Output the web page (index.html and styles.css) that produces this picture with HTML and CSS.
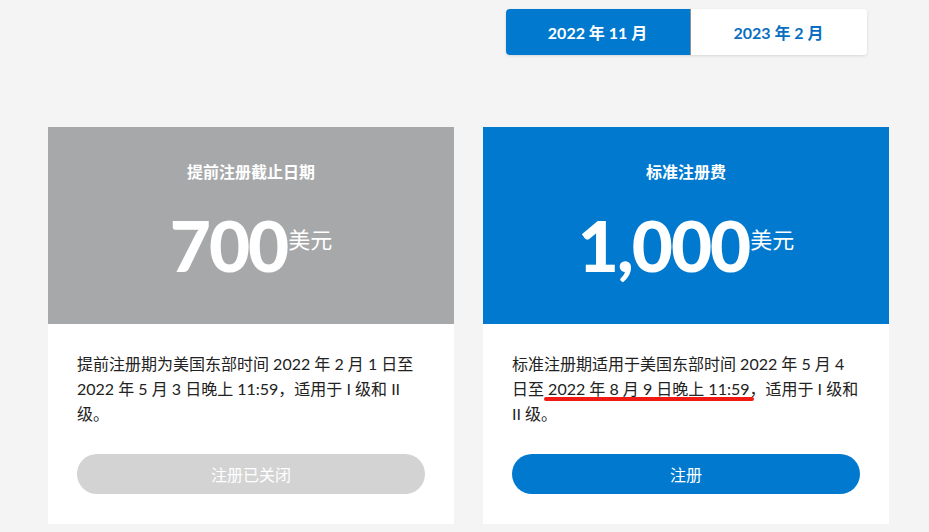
FILE: index.html
```html
<!DOCTYPE html>
<html lang="zh-CN">
<head>
    <meta charset="UTF-8">
    <meta name="viewport" content="width=device-width, initial-scale=1.0">
    <title>注册费</title>
    <link rel="stylesheet" href="styles.css">
</head>
<body>
    <div class="page">
        <div class="tabs-row">
            <div class="tabs">
                <button class="tab active">2022 年 11 月</button>
                <button class="tab">2023 年 2 月</button>
            </div>
        </div>

        <div class="cards">
            <div class="card">
                <div class="card-head grey">
                    <h2 class="card-title">提前注册截止日期</h2>
                    <div class="price">
                        <span class="amount">700</span><span class="unit">美元</span>
                    </div>
                </div>
                <div class="card-body">
                    <p class="desc">提前注册期为美国东部时间 2022 年 2 月 1 日至 2022 年 5 月 3 日晚上 11:59，适用于 I 级和 II 级。</p>
                    <button class="btn disabled">注册已关闭</button>
                </div>
            </div>

            <div class="card">
                <div class="card-head blue">
                    <h2 class="card-title">标准注册费</h2>
                    <div class="price">
                        <span class="amount">1,000</span><span class="unit">美元</span>
                    </div>
                </div>
                <div class="card-body">
                    <p class="desc">标准注册期适用于美国东部时间 2022 年 5 月 4 日至<span class="mark"> 2022 年 8 月 9 日晚上 11:59</span>，适用于 I 级和 II 级。</p>
                    <button class="btn">注册</button>
                </div>
            </div>
        </div>
    </div>
</body>
</html>
```

FILE: styles.css
```css
body {
    margin: 0;
    background-color: #f4f4f4;
    font-family: Lato, "Noto Sans CJK SC", sans-serif;
    color: #222;
}

.page {
    width: 841px;
    margin-left: 48px;
}

/* 月份切换 */
.tabs-row {
    display: grid;
    grid-template-columns: 406px 406px;
    column-gap: 29px;
    padding-top: 9px;
}

.tabs {
    grid-column: 2;
    justify-self: center;
    display: flex;
    width: 361px;
    height: 46px;
    border-radius: 4px;
    background-color: #fff;
    box-shadow: 0 1px 3px rgba(0, 0, 0, 0.12);
    overflow: hidden;
}

.tab {
    flex: 1;
    border: none;
    background: #fff;
    color: #0a6fc2;
    font-family: Lato, "Noto Sans CJK SC", sans-serif;
    font-size: 16px;
    font-weight: 700;
    cursor: pointer;
}

.tab.active {
    flex: 0 0 185px;
    background-color: #0079cf;
    color: #fff;
    border-right: 1px solid #8a8f96;
}

/* 价格卡片 */
.cards {
    display: grid;
    grid-template-columns: 406px 406px;
    column-gap: 29px;
    margin-top: 72px;
}

.card {
    background-color: #fff;
}

.card-head {
    height: 197px;
    display: flex;
    flex-direction: column;
    align-items: center;
    color: #fff;
}

.card-head.grey {
    background-color: #a7a8aa;
}

.card-head.blue {
    background-color: #0079cf;
}

.card-title {
    margin: 33px 0 0;
    font-size: 16px;
    font-weight: 700;
    line-height: 24px;
}

.price {
    display: flex;
    align-items: flex-start;
    margin-top: 19px;
}

.amount {
    font-size: 71px;
    font-weight: 900;
    line-height: 84px;
    letter-spacing: -2px;
}

.unit {
    font-size: 22px;
    line-height: 22px;
    margin-top: 26px;
    margin-left: 1px;
}

.card-body {
    padding: 27px 29px 30px;
}

.desc {
    margin: 0 0 28px;
    font-size: 16px;
    line-height: 25px;
    min-height: 75px;
}

/* 红色标注线 */
.mark {
    position: relative;
}

.mark::after {
    content: "";
    position: absolute;
    left: 0;
    right: -4px;
    bottom: -3px;
    height: 4px;
    border-radius: 2px;
    background-color: #f01a14;
}

.btn {
    display: block;
    width: 100%;
    height: 40px;
    border: none;
    border-radius: 20px;
    background-color: #0079cf;
    color: #fff;
    font-family: Lato, "Noto Sans CJK SC", sans-serif;
    font-size: 16px;
    cursor: pointer;
}

.btn.disabled {
    background-color: #d3d3d3;
    cursor: default;
}
```
